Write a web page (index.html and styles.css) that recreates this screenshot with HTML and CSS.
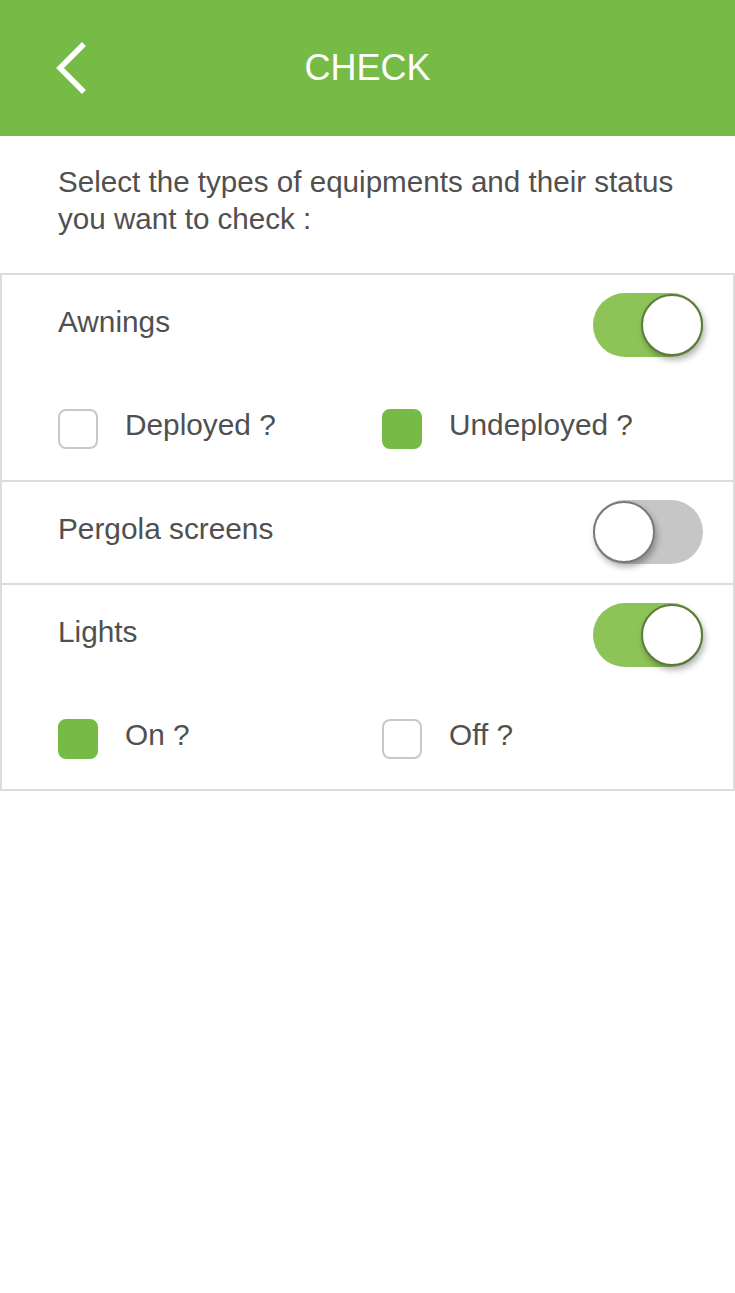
FILE: index.html
```html
<!DOCTYPE html>
<html>
<head>
<meta charset="utf-8">
<link rel="stylesheet" href="styles.css">
</head>
<body>
<header class="topbar">
  <svg class="back" width="40" height="60" viewBox="0 0 40 60">
    <polyline points="28,8 6,30 28,52" fill="none" stroke="#fff" stroke-width="5.5" stroke-linecap="square" stroke-linejoin="miter"/>
  </svg>
  <h1 class="title">CHECK</h1>
</header>
<p class="intro">Select the types of equipments and their status<br>you want to check :</p>
<section class="card first">
  <div class="card-head">
    <span class="label">Awnings</span>
    <span class="toggle on"><span class="knob"></span></span>
  </div>
  <div class="options">
    <label class="opt"><span class="box"></span><span class="opt-text">Deployed ?</span></label>
    <label class="opt"><span class="box checked"></span><span class="opt-text">Undeployed ?</span></label>
  </div>
</section>
<section class="card">
  <div class="card-head">
    <span class="label">Pergola screens</span>
    <span class="toggle off"><span class="knob"></span></span>
  </div>
</section>
<section class="card last">
  <div class="card-head">
    <span class="label">Lights</span>
    <span class="toggle on"><span class="knob"></span></span>
  </div>
  <div class="options">
    <label class="opt"><span class="box checked"></span><span class="opt-text">On ?</span></label>
    <label class="opt"><span class="box"></span><span class="opt-text">Off ?</span></label>
  </div>
</section>
</body>
</html>
```
FILE: styles.css
```css
html, body {
  margin: 0;
  padding: 0;
  background: #fff;
  font-family: "Liberation Sans", Arial, sans-serif;
  color: #505050;
}
.topbar {
  height: 136px;
  background: #76bb46;
  display: flex;
  align-items: center;
  position: relative;
  padding-left: 54px;
  box-sizing: border-box;
}
.back {
  display: block;
  margin-top: 0;
}
.title {
  position: absolute;
  left: 0;
  right: 0;
  top: 47px;
  margin: 0;
  text-align: center;
  font-weight: normal;
  font-size: 36px;
  line-height: 42px;
  color: #fff;
  pointer-events: none;
}
.intro {
  margin: 0;
  padding: 27px 20px 36px 58px;
  font-size: 29.6px;
  line-height: 37px;
  color: #505050;
  white-space: nowrap;
}
.card {
  border: 2px solid #dcdcdc;
  border-bottom: none;
  padding: 18px 30px 30px 56px;
}
.card.first {
  padding-bottom: 31px;
}
.card.last {
  border-bottom: 2px solid #dcdcdc;
}
.card-head {
  display: flex;
  justify-content: space-between;
  align-items: flex-start;
  height: 64px;
}
.card-head:only-child {
  margin-bottom: -11px;
}
.label {
  font-size: 29.8px;
  line-height: 34px;
  margin-top: 12px;
}
.toggle {
  width: 110px;
  height: 64px;
  border-radius: 32px;
  position: relative;
  display: block;
}
.toggle.on {
  background: #8dc458;
}
.toggle.off {
  background: #c6c6c6;
}
.knob {
  position: absolute;
  top: 1px;
  width: 58px;
  height: 58px;
  border-radius: 50%;
  background: #fff;
  box-shadow: 2px 4px 6px rgba(0, 0, 0, 0.3);
}
.toggle.on .knob {
  right: 0;
  border: 2px solid #5d7a3e;
}
.toggle.off .knob {
  left: 0;
  border: 2px solid #7a7a7a;
}
.options {
  display: grid;
  grid-template-columns: 324px 1fr;
  margin-top: 52px;
}
.opt {
  display: flex;
  align-items: center;
  gap: 27px;
}
.box {
  width: 36px;
  height: 36px;
  border: 2px solid #c8c8c8;
  border-radius: 8px;
  display: block;
}
.box.checked {
  background: #76bb46;
  border-color: #76bb46;
}
.opt-text {
  font-size: 29.8px;
  line-height: 34px;
  margin-top: -8px;
}
```
